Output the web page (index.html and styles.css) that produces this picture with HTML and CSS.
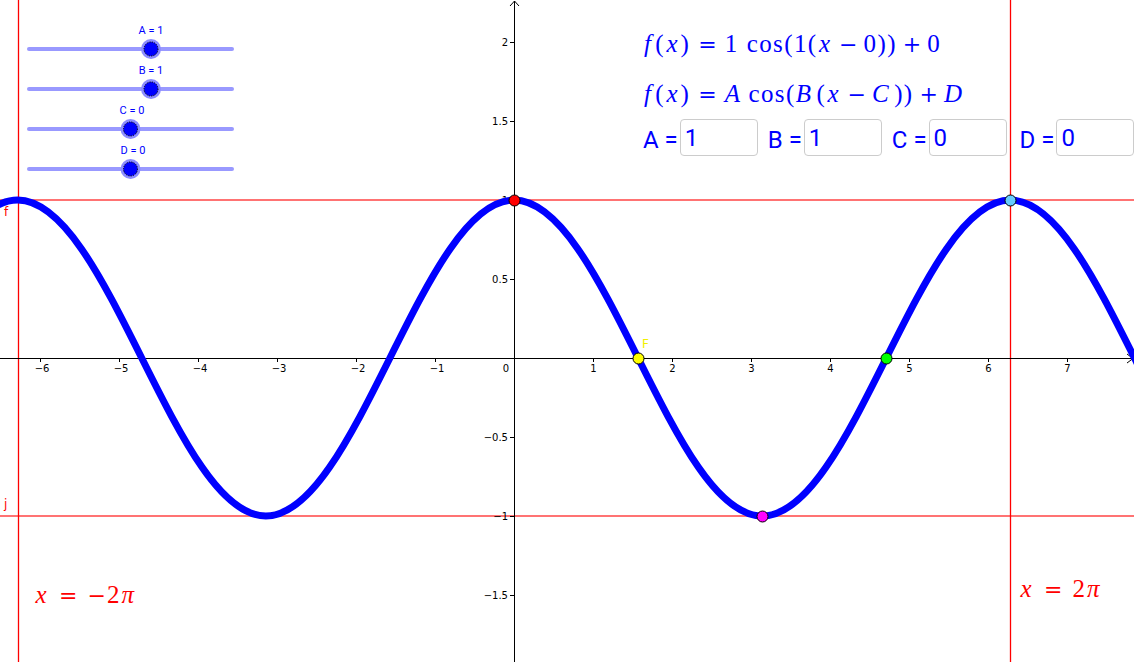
FILE: index.html
```html
<!DOCTYPE html>
<html>
<head>
<meta charset="utf-8">
<link rel="stylesheet" href="styles.css">
</head>
<body>
<div class="applet">
  <svg class="graph" width="1134" height="662" viewBox="0 0 1134 662" xmlns="http://www.w3.org/2000/svg">
    <!-- guide lines -->
    <line class="hline" x1="0" y1="200" x2="1134" y2="200"/>
    <line class="hline" x1="0" y1="516" x2="1134" y2="516"/>
    <line class="vline" x1="18.5" y1="0" x2="18.5" y2="662"/>
    <line class="vline" x1="1010.5" y1="0" x2="1010.5" y2="662"/>

    <!-- axes -->
    <line class="axis" x1="0" y1="358.5" x2="1133" y2="358.5"/>
    <polyline class="axis" points="1127,354 1133,358.5 1127,363"/>
    <line class="axis" x1="514.5" y1="1" x2="514.5" y2="662"/>
    <polyline class="axis" points="510,6 514.5,1 519,6"/>

    <!-- ticks -->
    <g class="axis">
      <line x1="40.5" y1="358" x2="40.5" y2="362"/>
      <line x1="119.5" y1="358" x2="119.5" y2="362"/>
      <line x1="198.5" y1="358" x2="198.5" y2="362"/>
      <line x1="277.5" y1="358" x2="277.5" y2="362"/>
      <line x1="356.5" y1="358" x2="356.5" y2="362"/>
      <line x1="435.5" y1="358" x2="435.5" y2="362"/>
      <line x1="593.5" y1="358" x2="593.5" y2="362"/>
      <line x1="672.5" y1="358" x2="672.5" y2="362"/>
      <line x1="751.5" y1="358" x2="751.5" y2="362"/>
      <line x1="830.5" y1="358" x2="830.5" y2="362"/>
      <line x1="909.5" y1="358" x2="909.5" y2="362"/>
      <line x1="988.5" y1="358" x2="988.5" y2="362"/>
      <line x1="1067.5" y1="358" x2="1067.5" y2="362"/>
      <line x1="510" y1="42.5" x2="514" y2="42.5"/>
      <line x1="510" y1="121.5" x2="514" y2="121.5"/>
      <line x1="510" y1="200.5" x2="514" y2="200.5"/>
      <line x1="510" y1="279.5" x2="514" y2="279.5"/>
      <line x1="510" y1="437.5" x2="514" y2="437.5"/>
      <line x1="510" y1="516.5" x2="514" y2="516.5"/>
      <line x1="510" y1="595.5" x2="514" y2="595.5"/>
    </g>
    <g class="tick-x">
      <text x="42" y="372">−6</text>
      <text x="121" y="372">−5</text>
      <text x="200" y="372">−4</text>
      <text x="279" y="372">−3</text>
      <text x="358" y="372">−2</text>
      <text x="437" y="372">−1</text>
      <text x="506" y="372">0</text>
      <text x="593.5" y="372">1</text>
      <text x="672.5" y="372">2</text>
      <text x="751.5" y="372">3</text>
      <text x="830.5" y="372">4</text>
      <text x="909.5" y="372">5</text>
      <text x="988.5" y="372">6</text>
      <text x="1067.5" y="372">7</text>
    </g>
    <g class="tick-y">
      <text x="508" y="46">2</text>
      <text x="508" y="125">1.5</text>
      <text x="508" y="204">1</text>
      <text x="508" y="283">0.5</text>
      <text x="508" y="441">−0.5</text>
      <text x="508" y="520">−1</text>
      <text x="508" y="599">−1.5</text>
    </g>

    <!-- curve f(x) = cos x -->
    <path class="curve" d="M -230.57 516
      C -185.65 516, -146.94 438.94, -106.48 358
      C -66.01 277.06, -27.30 200, 17.63 200
      C 62.54 200, 101.25 277.06, 141.72 358
      C 182.19 438.94, 220.90 516, 265.81 516
      C 310.73 516, 349.44 438.94, 389.91 358
      C 430.38 277.06, 469.09 200, 514 200
      C 558.91 200, 597.62 277.06, 638.09 358
      C 678.56 438.94, 717.27 516, 762.19 516
      C 807.11 516, 845.82 438.94, 886.28 358
      C 926.75 277.06, 965.46 200, 1010.37 200
      C 1055.28 200, 1093.99 277.06, 1134.46 358
      C 1174.93 438.94, 1213.64 516, 1258.56 516"/>

    <!-- line labels -->
    <text class="obj-label" x="4" y="216">f</text>
    <text class="obj-label" x="4" y="508">j</text>

    <!-- points -->
    <circle class="pt" cx="514.5" cy="200.5" r="5.5" fill="#ff0000"/>
    <circle class="pt" cx="638.5" cy="358.5" r="5.5" fill="#ffff00"/>
    <text class="pt-label" x="642" y="348">F</text>
    <circle class="pt" cx="886.5" cy="358.5" r="5.5" fill="#00ff00"/>
    <circle class="pt" cx="762.5" cy="516.5" r="5.5" fill="#ff00ff"/>
    <circle class="pt" cx="1010.5" cy="200.5" r="5.5" fill="#66ccff"/>

    <!-- sliders -->
    <g class="slider">
      <text class="slider-label" x="151" y="34">A = 1</text>
      <line class="track" x1="29" y1="49" x2="232" y2="49"/>
      <circle class="halo" cx="151" cy="49" r="10"/>
      <circle class="knob" cx="151" cy="49" r="7"/>
    </g>
    <g class="slider">
      <text class="slider-label" x="151" y="74">B = 1</text>
      <line class="track" x1="29" y1="89" x2="232" y2="89"/>
      <circle class="halo" cx="151" cy="89" r="10"/>
      <circle class="knob" cx="151" cy="89" r="7"/>
    </g>
    <g class="slider">
      <text class="slider-label" x="132" y="114">C = 0</text>
      <line class="track" x1="29" y1="129" x2="232" y2="129"/>
      <circle class="halo" cx="130.5" cy="129" r="10"/>
      <circle class="knob" cx="130.5" cy="129" r="7"/>
    </g>
    <g class="slider">
      <text class="slider-label" x="133" y="154">D = 0</text>
      <line class="track" x1="29" y1="169" x2="232" y2="169"/>
      <circle class="halo" cx="130.5" cy="169" r="10"/>
      <circle class="knob" cx="130.5" cy="169" r="7"/>
    </g>
  </svg>

  <div class="formulas">
    <div class="formula"><i class="fi">f</i>(<i class="xi">x</i>)<span class="rel">=</span>1<span class="op">cos</span>(1(<i class="xi">x</i><span class="bin">−</span>0))<span class="bin">+</span>0</div>
    <div class="formula"><i class="fi">f</i>(<i class="xi">x</i>)<span class="rel">=</span><i class="cap">A</i><span class="op op-a">cos</span>(<i class="cap">B</i>(<i class="xi">x</i><span class="bin">−</span><i class="cap">C</i>))<span class="bin">+</span><i class="cap">D</i></div>
  </div>

  <div class="inputs">
    <div class="field"><span class="field-label">A =</span><span class="box">1</span></div>
    <div class="field"><span class="field-label">B =</span><span class="box">1</span></div>
    <div class="field"><span class="field-label">C =</span><span class="box">0</span></div>
    <div class="field field-d"><span class="field-label">D =</span><span class="box">0</span></div>
  </div>

  <div class="eq eq-left"><i class="xi">x</i><span class="rel">=</span><span class="neg">−</span>2<i class="pi">π</i></div>
  <div class="eq eq-right"><i class="xi">x</i><span class="rel">=</span>2<i class="pi">π</i></div>
</div>
</body>
</html>
```

FILE: styles.css
```css
* { box-sizing: border-box; }

html, body {
  margin: 0;
  padding: 0;
  background: #ffffff;
}

.applet {
  position: relative;
  width: 1134px;
  height: 662px;
  overflow: hidden;
  background: #ffffff;
}

.graph {
  position: absolute;
  left: 0;
  top: 0;
  display: block;
}

.hline {
  stroke: rgba(255, 0, 0, 0.55);
  stroke-width: 2;
}

.vline {
  stroke: #ff0000;
  stroke-width: 1.3;
}

.axis {
  stroke: #000000;
  stroke-width: 1;
  fill: none;
}

.tick-x text,
.tick-y text {
  font-family: "DejaVu Sans", "Liberation Sans", sans-serif;
  font-size: 10px;
  fill: #000000;
}

.tick-x text { text-anchor: middle; }
.tick-y text { text-anchor: end; }

.curve {
  fill: none;
  stroke: #0000ff;
  stroke-width: 7;
  stroke-linejoin: round;
}

.obj-label {
  font-family: "DejaVu Sans", sans-serif;
  font-size: 12px;
  fill: #ff0000;
}

.pt {
  stroke: #000000;
  stroke-width: 1;
}

.pt-label {
  font-family: "DejaVu Sans", sans-serif;
  font-size: 12px;
  fill: #f0f000;
}

.track {
  stroke: #9999ff;
  stroke-width: 4;
  stroke-linecap: round;
}

.halo {
  fill: #8c8cff;
}

.knob {
  fill: #0000ff;
  stroke: #000000;
  stroke-width: 1;
  stroke-dasharray: 1.2 1.2;
}

.slider-label {
  font-family: Roboto, "Liberation Sans", sans-serif;
  font-size: 11px;
  fill: #0000ff;
  text-anchor: middle;
}

/* formulas (TeX-like) */
.formulas {
  position: absolute;
  left: 642px;
  top: 19px;
  display: flex;
  flex-direction: column;
  color: #0000ff;
}

.formula {
  font-family: "Liberation Serif", "DejaVu Serif", serif;
  font-size: 25px;
  line-height: 50px;
  height: 50px;
  white-space: nowrap;
  letter-spacing: 1.4px;
}

.formula i, .eq i {
  font-style: italic;
}

.fi { margin-left: 2px; margin-right: 3px; }
.xi { margin: 0 1.5px; }
.cap { margin-right: 4px; }
.pi { margin-left: 1px; }

.rel,
.bin,
.neg {
  font-family: "DejaVu Serif", "Liberation Serif", serif;
  font-size: 22px;
  letter-spacing: 0;
}

.formula .rel { margin: 0 8px; }
.rel { margin: 0 10px; }
.bin { margin: 0 6px; }
.neg { margin-right: 1px; }
.op { margin-left: 8px; }
.op-a { margin-left: 3px; }

/* inputs */
.inputs {
  position: absolute;
  left: 643px;
  top: 119px;
  display: flex;
  align-items: center;
  gap: 10px;
  white-space: nowrap;
}

.field {
  display: flex;
  align-items: center;
  gap: 2px;
}

.field-d { margin-left: 3px; }

.field-label {
  font-family: Roboto, "Liberation Sans", sans-serif;
  font-size: 24px;
  color: #0000ff;
  padding-top: 4px;
}

.box {
  width: 78px;
  height: 37px;
  border: 1px solid #cccccc;
  border-radius: 4px;
  background: #ffffff;
  font-family: Roboto, "Liberation Sans", sans-serif;
  font-size: 24px;
  color: #0000ff;
  padding: 4px 0 0 4px;
  line-height: 29px;
}

/* red equations */
.eq {
  position: absolute;
  font-family: "Liberation Serif", "DejaVu Serif", serif;
  font-size: 25px;
  color: #ff0000;
  white-space: nowrap;
  line-height: 30px;
  letter-spacing: 1px;
}

.eq-left { left: 34px; top: 580px; }
.eq-right { left: 1019px; top: 574px; }
```
